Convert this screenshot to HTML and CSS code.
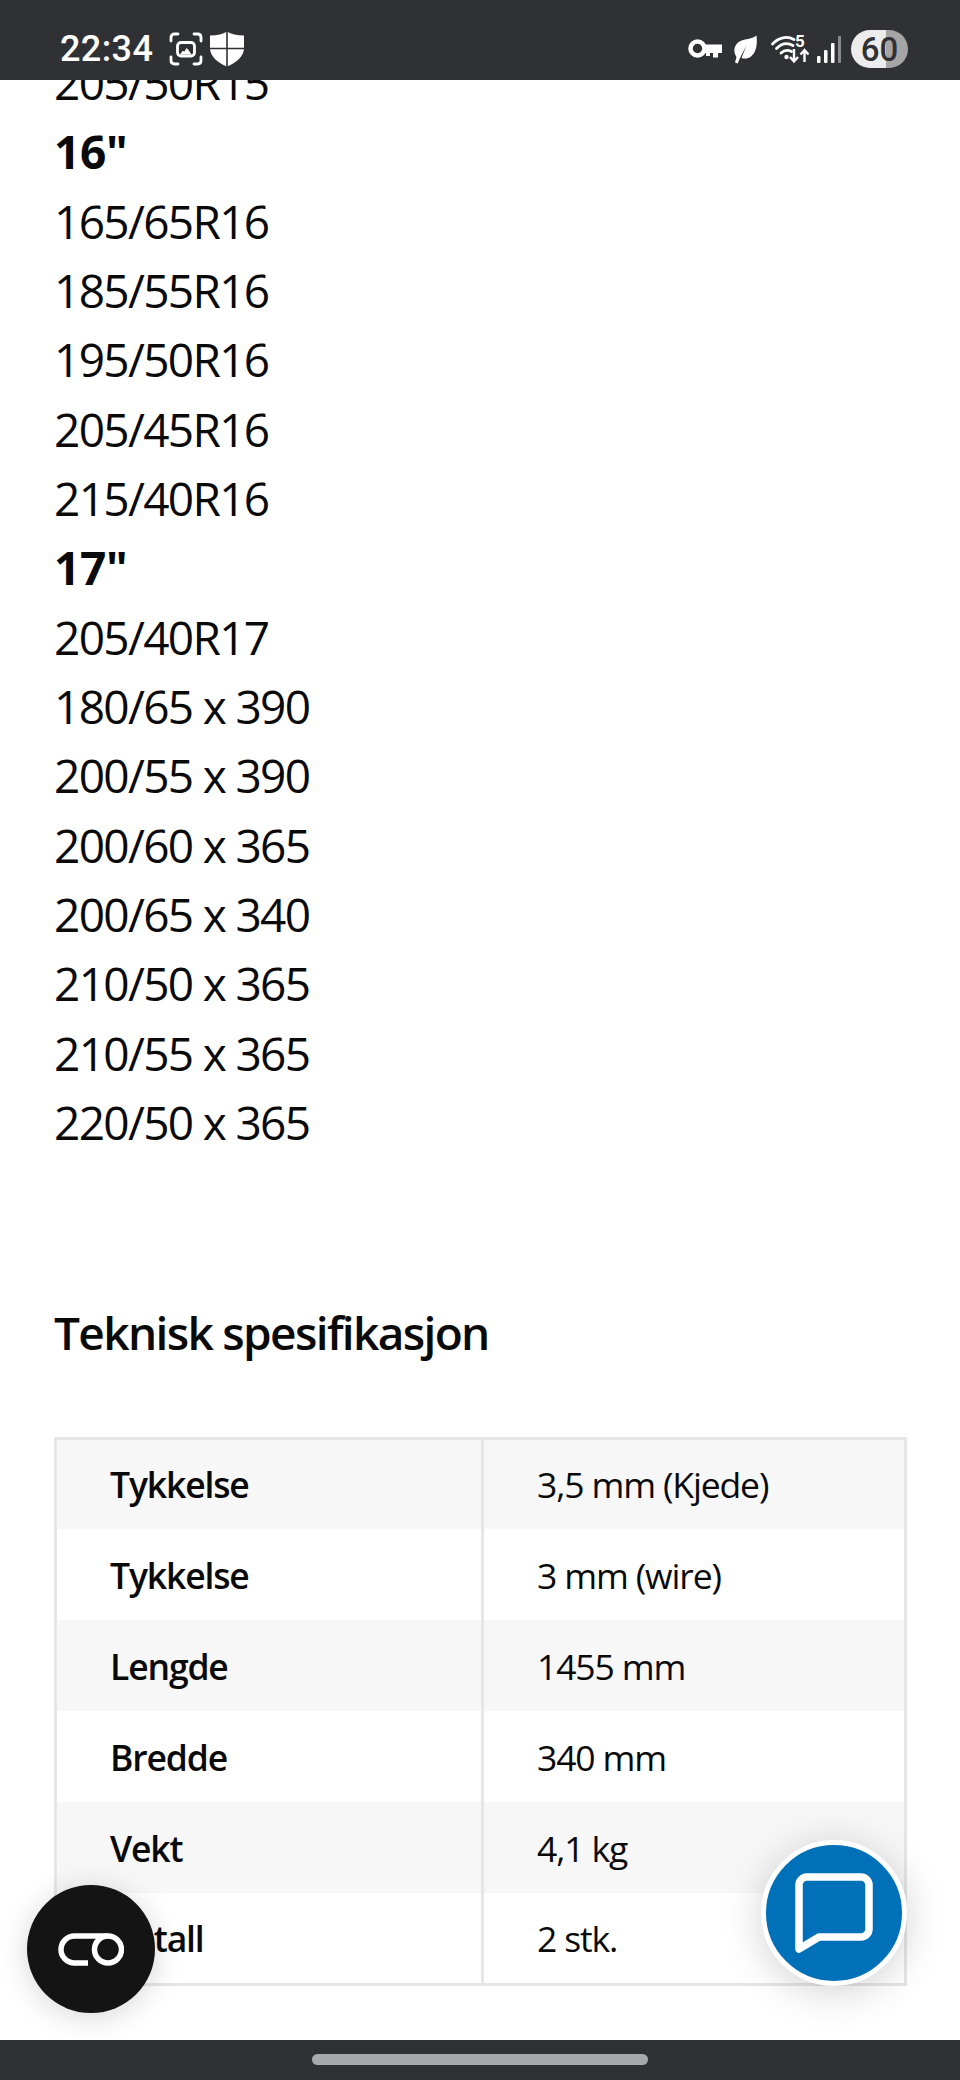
FILE: index.html
```html
<!DOCTYPE html>
<html lang="no">
<head>
<meta charset="utf-8">
<title>Teknisk spesifikasjon</title>
<link rel="stylesheet" href="styles.css">
</head>
<body>
<div class="phone">
  <header class="status">
    <div class="status-left">
      <span class="time">22:34</span>
      <svg class="ic-shot" viewBox="0 0 34 34" width="34" height="34"><g fill="none" stroke="#fff" stroke-width="2.800" stroke-linecap="round"><path d="M2 9V5.500Q2 2 5.500 2H9M25 2h3.500Q32 2 32 5.500V9M32 25v3.500Q32 32 28.500 32H25M9 32H5.500Q2 32 2 28.500V25"/><rect x="8.500" y="10.500" width="17" height="13.500" rx="3.500"/></g><path d="M11 22.500l2.500-3.500 2 .5 2-3.500 2 2 1 1.500 2 3z" fill="#fff"/></svg>
      <svg class="ic-shield" viewBox="0 0 36 36" width="36" height="36"><path d="M18 0.500C14 3 8 4.500 1 4.500V17c0 8 7 14.500 17 18.500 10-4 17-10.500 17-18.500V4.500C28 4.500 22 3 18 0.500z" fill="#fff"/><path d="M18 0v36M0 17.500h36" stroke="#303135" stroke-width="1.600"/></svg>
    </div>
    <div class="status-right">
      <svg class="ic-key" viewBox="0 0 34 20" width="34" height="20"><circle cx="9.500" cy="9.500" r="7" fill="none" stroke="#fff" stroke-width="4.500"/><path d="M15 5.500h19v8.500h-4v4.500h-5v-4.500h-3v3h-4v-3h-3z" fill="#fff"/></svg>
      <svg class="ic-leaf" viewBox="0 0 24 29" width="24" height="29"><path d="M23.500 0.500C24.500 9 23.500 17 18 21.500c-3 2.300-6.500 2.500-9.500 1.500l5-12.500L6.500 24l-1.800 4.500-2.700-1L3.500 22C0.500 17 0.500 12 4.500 8 9.500 3.500 17.500 5 23.500 0.500z" fill="#fff"/></svg>
      <svg class="ic-wifi" viewBox="0 0 38 30" width="38" height="30"><g fill="none" stroke="#fff" stroke-width="2.800" stroke-linecap="round"><path d="M1.500 10C7.500 3.500 16 1.500 23 5.500"/><path d="M5.500 14.500c5-5 11-6 16.500-3"/><path d="M10 19c3-2.700 7-3.300 10.500-1.500"/></g><circle cx="15.500" cy="23" r="2.200" fill="#fff"/><path d="M23 15v12M19 23l4 4.500 4-4.500M33.500 28V16M29.500 20.500l4-4.500 4 4.500" fill="none" stroke="#fff" stroke-width="2.400"/><text x="24" y="13" class="wifi-5">5</text></svg>
      <svg class="ic-signal" viewBox="0 0 24 27" width="24" height="27"><rect x="0" y="20" width="3.500" height="7" rx="1" fill="#fff"/><rect x="7" y="14" width="3.500" height="13" rx="1" fill="#fff"/><rect x="14" y="7" width="3.500" height="20" rx="1" fill="#fff"/><rect x="21" y="0" width="3" height="27" rx="1" fill="#8a8b8e"/></svg>
      <span class="battery"><span class="battery-text">60</span></span>
    </div>
  </header>

  <main class="page">
    <div class="content">
      <ul class="sizes">
        <li>205/50R15</li>
        <li class="head">16"</li>
        <li>165/65R16</li>
        <li>185/55R16</li>
        <li>195/50R16</li>
        <li>205/45R16</li>
        <li>215/40R16</li>
        <li class="head">17"</li>
        <li>205/40R17</li>
        <li>180/65 x 390</li>
        <li>200/55 x 390</li>
        <li>200/60 x 365</li>
        <li>200/65 x 340</li>
        <li>210/50 x 365</li>
        <li>210/55 x 365</li>
        <li>220/50 x 365</li>
      </ul>
      <h2 class="title">Teknisk spesifikasjon</h2>
      <table class="spec">
        <tr><th>Tykkelse</th><td>3,5 mm (Kjede)</td></tr>
        <tr><th>Tykkelse</th><td>3 mm (wire)</td></tr>
        <tr><th>Lengde</th><td>1455 mm</td></tr>
        <tr><th>Bredde</th><td>340 mm</td></tr>
        <tr><th>Vekt</th><td>4,1 kg</td></tr>
        <tr><th>Antall</th><td>2 stk.</td></tr>
      </table>
    </div>
    <button class="fab fab-co" aria-label="CO">
      <svg viewBox="0 0 66 33" width="66" height="33"><path d="M30 30H16.500a13.500 13.500 0 0 1 0-27H50" fill="none" stroke="#fff" stroke-width="5.500"/><circle cx="50" cy="16.500" r="13.500" fill="none" stroke="#fff" stroke-width="5.500"/></svg>
    </button>
    <button class="fab fab-chat" aria-label="Chat">
      <svg viewBox="0 0 78 80" width="78" height="80"><path d="M12 4h54a8 8 0 0 1 8 8v44a8 8 0 0 1-8 8H24L4 76V12a8 8 0 0 1 8-8z" fill="none" stroke="#fff" stroke-width="7.500" stroke-linejoin="round"/></svg>
    </button>
  </main>

  <footer class="nav"><span class="handle"></span></footer>
</div>
</body>
</html>
```
FILE: styles.css
```css
* { box-sizing: border-box; }
html, body { margin: 0; padding: 0; background: #fff; }
.phone {
  width: 960px;
  height: 2080px;
  display: flex;
  flex-direction: column;
  overflow: hidden;
  font-family: "Open Sans", "Noto Sans", sans-serif;
  color: #0a0a0a;
}
.status {
  height: 80px;
  flex: none;
  background: #303135;
  color: #fff;
  display: flex;
  justify-content: space-between;
  align-items: center;
  padding: 0 52px 0 60px;
  position: relative;
  z-index: 2;
}
.status-left, .status-right { display: flex; align-items: center; }
.status-left { margin-top: 18px; }
.status-right { margin-top: 18px; }
.time {
  font-family: Roboto, "Liberation Sans", sans-serif;
  font-size: 36px;
  font-weight: 500;
  letter-spacing: 0.4px;
  margin-right: 16px;
}
.ic-shot { margin-right: 6px; }
.ic-key { margin-right: 11px; }
.ic-leaf { margin-right: 14px; }
.ic-wifi { margin-right: 8px; overflow: visible; }
.ic-signal { margin-right: 10px; }
.wifi-5 { font: 700 17px Roboto, sans-serif; fill: #fff; }
.battery {
  width: 57px;
  height: 38px;
  border-radius: 19px;
  background: linear-gradient(90deg, #ececec 0 61%, #a5a5a6 61% 100%);
  color: #303135;
  display: flex;
  align-items: center;
  justify-content: center;
}
.battery-text {
  font-family: Roboto, sans-serif;
  font-size: 33px;
  font-weight: 500;
}
.page {
  flex: 1;
  position: relative;
  overflow: hidden;
  background: #fff;
}
.content {
  padding: 0 53px 0 54px;
  margin-top: -32px;
}
.sizes {
  list-style: none;
  margin: 0;
  padding: 0;
  font-size: 46px;
  letter-spacing: -1.660px;
  line-height: 69.350px;
}
.sizes .head { font-weight: 700; letter-spacing: -0.300px; }
.title {
  font-size: 46px;
  letter-spacing: -1.650px;
  font-weight: 600;
  line-height: 56px;
  margin: 146px 0 0;
}
.spec {
  width: 853px;
  margin-top: 77px;
  border-collapse: collapse;
  table-layout: fixed;
  border: 3px solid #e6e6e6;
  font-size: 35.500px;
  letter-spacing: -1.140px;
}
.spec tr { height: 91px; }
.spec tr:nth-child(odd) { background: #f7f7f7; }
.spec th, .spec td {
  padding: 0 0 0 53px;
  text-align: left;
  vertical-align: middle;
}
.spec th { font-weight: 600; border-right: 3px solid #e6e6e6; width: 427px; }
.spec td { font-weight: 400; }
.fab {
  position: absolute;
  border: 0;
  padding: 0;
  display: flex;
  align-items: center;
  justify-content: center;
  border-radius: 50%;
}
.fab-co {
  left: 27px;
  top: 1805px;
  width: 128px;
  height: 128px;
  background: #141414;
  box-shadow: 0 4px 30px rgba(0, 0, 0, 0.16);
}
.fab-chat {
  left: 761px;
  top: 1760px;
  width: 146px;
  height: 146px;
  background: #0070b8;
  border: 5px solid #fff;
  box-shadow: 0 6px 40px rgba(0, 0, 0, 0.18);
}
.nav {
  height: 40px;
  flex: none;
  background: #303135;
  display: flex;
  justify-content: center;
  padding-top: 14px;
}
.handle {
  width: 336px;
  height: 11px;
  border-radius: 6px;
  background: #a8a9ab;
}
```
